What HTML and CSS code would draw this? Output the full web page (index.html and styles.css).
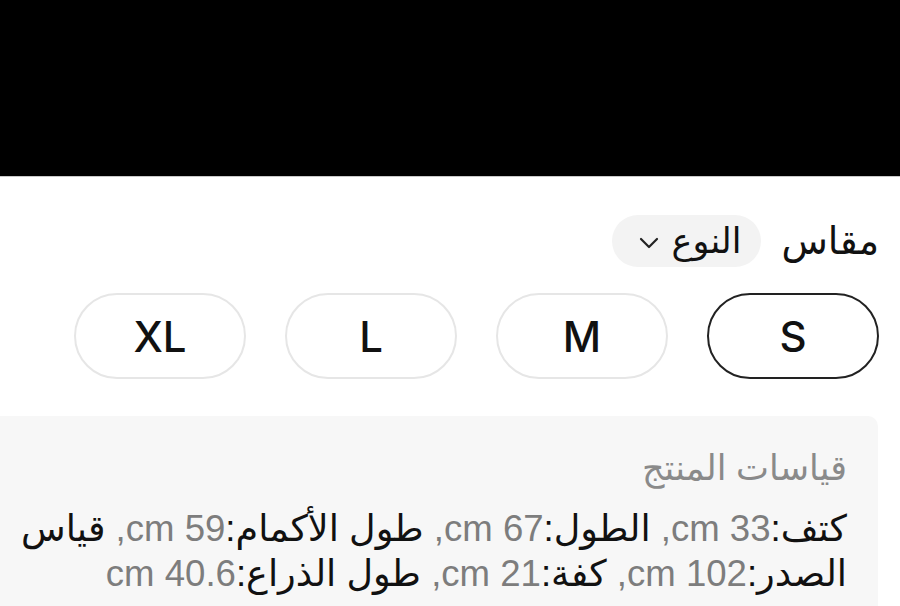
FILE: index.html
```html
<!doctype html>
<html lang="ar" dir="rtl">

<head>
<meta charset="utf-8">
<title>مقاس</title>

<link rel="stylesheet" href="styles.css">
</head>

<body>

<div class="topbar"></div>

<div class="content">
	<div class="titleRow">
		<div class="sectionTitle">مقاس</div>
		<div class="typeChip">
			<span>النوع</span>
			<svg class="chevron" width="20" height="12" viewBox="0 0 20 12"><path d="M2 2 L10 10 L18 2" fill="none" stroke="#222" stroke-width="2.2" stroke-linecap="round" stroke-linejoin="round"/></svg>
		</div>
	</div>

	<div class="sizes">
		<div class="sizeBtn selected">S</div>
		<div class="sizeBtn">M</div>
		<div class="sizeBtn">L</div>
		<div class="sizeBtn">XL</div>
	</div>
</div>

<div class="measures">
	<div class="measuresTitle">قياسات المنتج</div>
	<div class="measuresText"><span class="key">كتف:</span><span class="val">33 cm, </span><span class="key">الطول:</span><span class="val">67 cm, </span><span class="key">طول الأكمام:</span><span class="val">59 cm, </span><span class="key">قياس الصدر:</span><span class="val">102 cm, </span><span class="key">كفة:</span><span class="val">21 cm, </span><span class="key">طول الذراع:</span><span class="val">40.6 cm</span></div>
</div>

</body>

</html>
```

FILE: styles.css
```css
html,body {
	margin:0;
	width:900px;
	height:606px;
	overflow:hidden;
	background-color:#fff;
	color:#111;
	font-family:"Liberation Sans", "DejaVu Sans", sans-serif;
}
.topbar {
	height:176px;
	background-color:#000;
	border-bottom:1px solid #c9c9c9;
}
.content {
	padding-right:21px;
}
.titleRow {
	display:flex;
	align-items:center;
	gap:20px;
	margin-top:38px;
}
.sectionTitle {
	font-size:38px;
	line-height:50px;
}
.typeChip {
	display:flex;
	align-items:center;
	gap:13px;
	height:52px;
	padding:0 20px 0 27px;
	border-radius:26px;
	background-color:#f3f3f3;
	font-size:35px;
}
.chevron {
	margin-top:4px;
}
.sizes {
	display:flex;
	gap:39px;
	margin-top:26px;
}
.sizeBtn {
	width:168px;
	height:82px;
	border:2px solid #e6e6e6;
	border-radius:43px;
	display:flex;
	align-items:center;
	justify-content:center;
	font-family:"Inter", sans-serif;
	font-weight:500;
	font-size:42px;
	color:#111;
}
.sizeBtn.selected {
	border-color:#222;
}
.measures {
	margin-top:37px;
	margin-right:22px;
	height:200px;
	padding:29px 31px 0 14px;
	background-color:#f7f7f7;
	border-top-right-radius:10px;
}
.measuresTitle {
	font-size:35px;
	line-height:46px;
	color:#8a8a8a;
}
.measuresText {
	margin-top:15px;
	font-size:36.6px;
	line-height:45px;
}
.key {color:#111;}
.val {color:#7d7d7d;}
```
